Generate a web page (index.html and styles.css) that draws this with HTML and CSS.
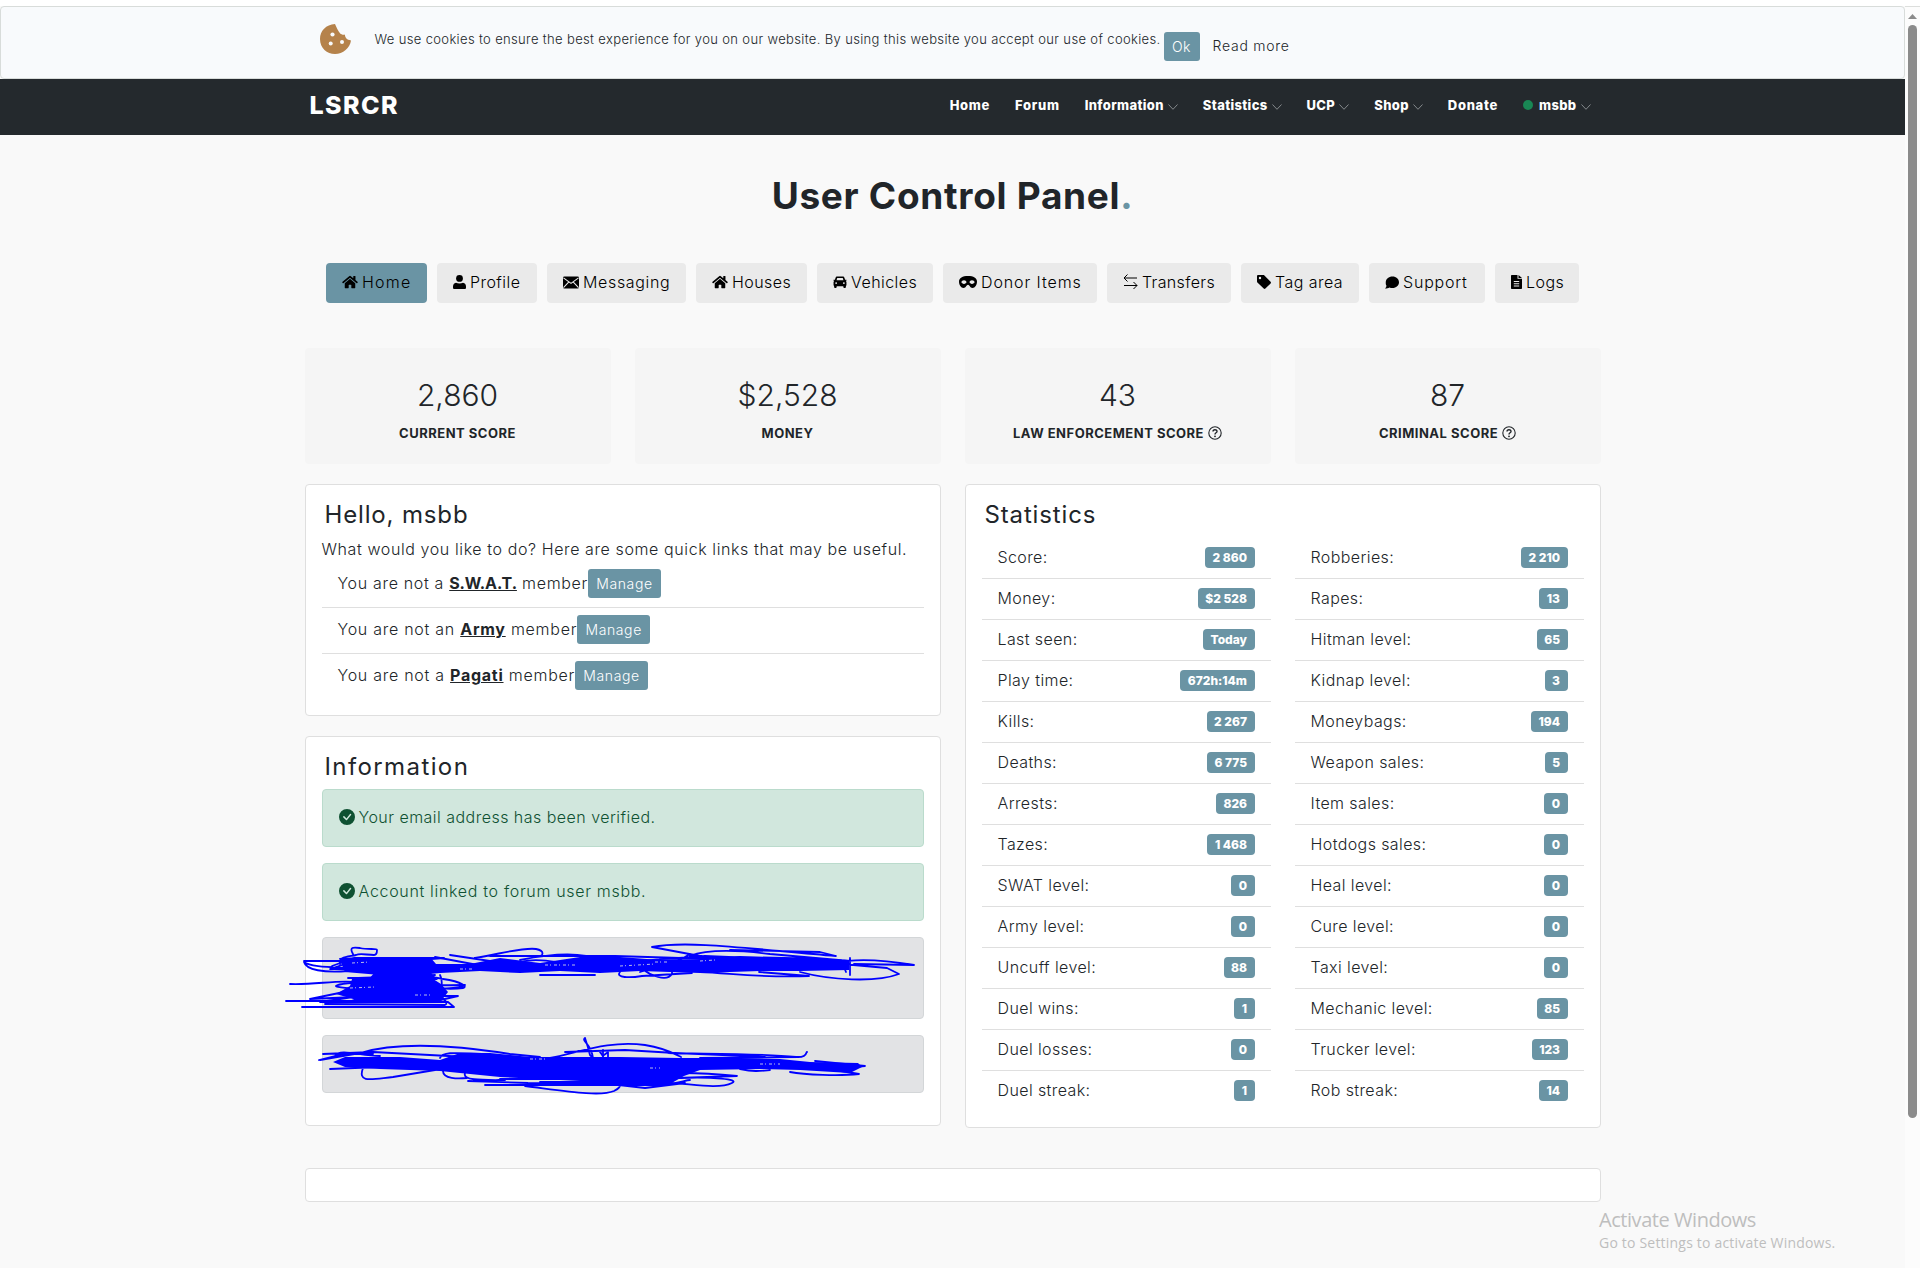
FILE: index.html
```html
<!doctype html>
<html lang="en">
<head>
    <meta charset="UTF-8">
    <title>User Control Panel</title>
    <link rel="stylesheet" href="styles.css">
</head>
<body>
<!-- shared icons -->
<svg class="sprite">
    <symbol id="i-home" viewBox="0 0 576 512"><path d="M280.4 148.3L96 300.1V464a16 16 0 0 0 16 16h112a16 16 0 0 0 16-16v-96a16 16 0 0 1 16-16h64a16 16 0 0 1 16 16v96a16 16 0 0 0 16 16h112a16 16 0 0 0 16-16V300L295.700 148.300a12 12 0 0 0-15.300 0zM571.600 251.500L488 182.600V44a12 12 0 0 0-12-12h-56a12 12 0 0 0-12 12v72.600L318.500 43a48 48 0 0 0-61 0L4.300 251.500a12 12 0 0 0-1.600 16.900l25.500 31A12 12 0 0 0 45.200 301l235.200-193.700a12 12 0 0 1 15.300 0L530.900 301a12 12 0 0 0 16.900-1.600l25.500-31a12 12 0 0 0-1.700-16.900z"/></symbol>
    <symbol id="i-check" viewBox="0 0 16 16"><path fill-rule="evenodd" d="M16 8A8 8 0 1 1 0 8a8 8 0 0 1 16 0zm-3.970-3.030a.75.75 0 0 0-1.080.022L7.477 9.417 5.384 7.323a.75.75 0 0 0-1.060 1.060L6.970 11.030a.75.75 0 0 0 1.079-.02l3.992-4.990a.75.75 0 0 0-.01-1.050z"/></symbol>
    <symbol id="i-down" viewBox="0 0 10 6"><path d="M.5.500L5 5.300 9.500.5" fill="none" stroke="currentColor"/></symbol>
    <symbol id="i-help" viewBox="0 0 14 14"><circle cx="7" cy="7" r="6.200" fill="none" stroke="currentColor" stroke-width="1.100"/><path d="M5 5.600C5 3.200 9 3.200 9 5.400 9 6.900 7 6.700 7 8.400" fill="none" stroke="currentColor" stroke-width="1.400"/><circle cx="7" cy="10.300" r=".9"/></symbol>
</svg>

<div class="cookie-bar">
    <div class="container cookie-inner">
        <svg class="cookie-icon" viewBox="0 0 31 30">
            <path d="M15 0C6 .500 0 7 0 15c0 9 7 15 15 15 8 0 15-6 16-13.500-2-.5-4-1-5-2.500-.8-1.200-1-2.500-1.200-3.500-1.500.500-3.500 0-4.800-1.300C18 7 16.500 3 15 0z"/>
            <circle class="hole" cx="12.500" cy="10.500" r="2.100"/><circle class="hole" cx="10.700" cy="19.500" r="2"/><circle class="hole" cx="22" cy="18" r="2"/>
        </svg>
        <span class="cookie-text">We use cookies to ensure the best experience for you on our website. By using this website you accept our use of cookies.</span>
        <a class="cookie-ok" href="#">Ok</a>
        <a class="cookie-more" href="#">Read more</a>
    </div>
</div>

<div class="navbar">
    <div class="container nav-inner">
        <a class="brand" href="#">LSRCR</a>
        <div class="nav">
            <a href="#">Home</a>
            <a href="#">Forum</a>
            <a href="#">Information<svg class="down"><use href="#i-down"/></svg></a>
            <a href="#">Statistics<svg class="down"><use href="#i-down"/></svg></a>
            <a href="#">UCP<svg class="down"><use href="#i-down"/></svg></a>
            <a href="#">Shop<svg class="down"><use href="#i-down"/></svg></a>
            <a href="#">Donate</a>
            <a href="#"><span class="online"></span>msbb<svg class="down"><use href="#i-down"/></svg></a>
        </div>
    </div>
</div>

<h1>User Control Panel<span>.</span></h1>

<div class="tabs">
    <a class="tab tab-home active" href="#"><svg width="16" height="14"><use href="#i-home"/></svg>Home</a>
    <a class="tab tab-profile" href="#"><svg width="13" height="14" viewBox="0 0 13 14"><circle cx="6.500" cy="3.400" r="3.400"/><path d="M3 7.700c2 1 5 1 7 0 2 .3 3 1.800 3 3.800v1c0 1-.5 1.500-1.500 1.500h-10C.5 14 0 13.500 0 12.500v-1c0-2 1-3.500 3-3.800z"/></svg>Profile</a>
    <a class="tab tab-messaging" href="#"><svg width="16" height="13" viewBox="0 0 17 13"><rect width="17" height="13" rx="1.500"/><path d="M.5 1.500l8 6 8-6M.500 12l5.500-6M16.500 12L11 6" fill="none" stroke="#eaeaea" stroke-width="1.100"/></svg>Messaging</a>
    <a class="tab tab-houses" href="#"><svg width="16" height="14"><use href="#i-home"/></svg>Houses</a>
    <a class="tab tab-vehicles" href="#"><svg width="14" height="12" viewBox="0 0 14 13"><path fill-rule="evenodd" d="M4 .5h6c1 0 1.500.5 1.800 1.300L12.500 4H14v1.200h-.8c.5.400.8 1 .8 1.600V10l-.6.700V12c0 .600-.4 1-1 1h-.8c-.6 0-1-.4-1-1v-1H3.400v1c0 .6-.4 1-1 1h-.8c-.6 0-1-.4-1-1v-1.300L0 10V6.800c0-.600.3-1.200.8-1.600H0V4h1.500l.7-2.200C2.500 1 3 .5 4 .5zM4 2.300L3.300 4.700h7.400L10 2.300zM2.800 6.700a1 1 0 1 0 .01 2 1 1 0 0 0 0-2zm8.400 0a1 1 0 1 0 .01 2 1 1 0 0 0 0-2z"/></svg>Vehicles</a>
    <a class="tab tab-donor" href="#"><svg width="18" height="12" viewBox="0 0 18 12"><path fill-rule="evenodd" d="M9 0c5.500 0 9 2 9 5.500C18 9 16 12 13.500 12 11 12 10.500 8.800 9 8.800S7 12 4.500 12C2 12 0 9 0 5.500 0 2 3.500 0 9 0zM5 4.200c-1.400 0-2.300 1-2.700 1.900.4.900 1.300 1.800 2.700 1.800s2.200-.9 2.600-1.800C7.200 5.200 6.400 4.200 5 4.200zm8 0c-1.400 0-2.200 1-2.600 1.900.4.900 1.200 1.800 2.600 1.800s2.300-.9 2.700-1.800c-.4-.9-1.300-1.900-2.700-1.900z"/></svg>Donor Items</a>
    <a class="tab tab-transfers" href="#"><svg width="15" height="16" viewBox="0 0 15 16"><path d="M14 4H1L4.500.500M1 4l3.500 3.500M1 11.500h13L10.500 8M14 11.500L10.500 15" fill="none" stroke="#000"/></svg>Transfers</a>
    <a class="tab tab-tag" href="#"><svg width="14" height="14" viewBox="0 0 14 14"><path fill-rule="evenodd" d="M0 1.300C0 .500.500 0 1.300 0h5c.5 0 .8.100 1.100.4l6.200 6.300c.5.500.5 1.200 0 1.700l-5.200 5.200c-.5.500-1.200.5-1.700 0L.4 7.400C.1 7.100 0 6.800 0 6.300zM3 1.800a1.200 1.200 0 1 0 .01 2.400 1.200 1.200 0 0 0 0-2.400z"/></svg>Tag area</a>
    <a class="tab tab-support" href="#"><svg width="14" height="13" viewBox="0 0 15 13"><path d="M8 0c4 0 7 2.800 7 6.200s-3 6.200-7 6.200c-1.200 0-2.200-.2-3.200-.6C3.500 12.600 2 13 0 13c1-.9 1.500-2 1.600-3C.8 9 .800 7.600.8 6.200.8 2.800 4 0 8 0z"/></svg>Support</a>
    <a class="tab tab-logs" href="#"><svg width="11" height="14" viewBox="0 0 11 14"><path fill-rule="evenodd" d="M1 0h5.500v3.700H11V13c0 .6-.4 1-1 1H1c-.6 0-1-.4-1-1V1c0-.6.4-1 1-1zm6.500 0L11 3H7.500zM2.800 6v1h5.400V6zm0 2.200v1h5.400v-1zm0 2.200v1h5.400v-1z"/></svg>Logs</a>
</div>

<div class="container">
    <div class="scores">
        <div class="score"><div class="score-num">2,860</div><div class="score-name">CURRENT SCORE</div></div>
        <div class="score"><div class="score-num">$2,528</div><div class="score-name">MONEY</div></div>
        <div class="score"><div class="score-num">43</div><div class="score-name">LAW ENFORCEMENT SCORE <svg><use href="#i-help"/></svg></div></div>
        <div class="score"><div class="score-num">87</div><div class="score-name">CRIMINAL SCORE <svg><use href="#i-help"/></svg></div></div>
    </div>

    <div class="columns">
        <div class="left">
            <div class="card hello">
                <h2>Hello, msbb</h2>
                <p>What would you like to do? Here are some quick links that may be useful.</p>
                <div class="link-row"><span>You are not a <b class="swat">S.W.A.T.</b> member</span><a class="manage" href="#">Manage</a></div>
                <div class="link-row"><span>You are not an <b>Army</b> member</span><a class="manage" href="#">Manage</a></div>
                <div class="link-row"><span>You are not a <b>Pagati</b> member</span><a class="manage" href="#">Manage</a></div>
            </div>

            <div class="card info">
                <h2>Information</h2>
                <div class="alert success"><svg><use href="#i-check"/></svg>Your email address has been verified.</div>
                <div class="alert success linked"><svg><use href="#i-check"/></svg>Account linked to forum user msbb.</div>
                <div class="alert secondary tall"></div>
                <div class="alert secondary"></div>
                <!-- pen marks over the two grey alerts -->
                <svg class="scribble" viewBox="280 920 660 180">
                    <g class="ink">
                        <path d="M339 958L365 957 400 958 430 957 436 964 470 964 500 958 540 963 580 957 620 957 660 960 700 959 727 957 760 957 790 958 849 960V970L800 971 760 971 700 973 640 971 600 973 560 971 520 973 480 971 440 973 420 975 380 975 345 972z"/>
                        <path d="M375 972h55l8 8h-70z"/>
                        <path d="M352 979L390 975 430 977 441 984 448 992 441 1001 400 1003 360 1001 336 994 350 986z"/>
                        <path d="M333 1062L345 1057 400 1057 440 1060 460 1053 490 1053 530 1057 570 1057 620 1057 680 1058 740 1058 780 1059 810 1062 858 1063 862 1067 850 1073 800 1070 760 1069 700 1070 684 1076 670 1084 640 1086 600 1082 540 1079 500 1077 460 1073 440 1071 380 1069 345 1067z"/>
                    </g>
                    <g class="pen">
                        <path d="M353 954c-4-7 0-7 7-6 8 2 17 0 17 2s0 5-3 5c-7 0-14-2-18 0-9 2-18 2-16 9M350 968c-20-1-40-1-46-6 2 8 20 11 44 9M304 961h50l-24 8h110M332 966l22-8h90l-64 5M290 984c25 1 45-4 65-2s50 4 110 3c-6 5-20 2-40 5M286 1001h150l22-5h-80l-68 3 34-7 100-1M302 1007h152l-6-5H320l40-6M440 975c4 8 0 12 2 22M353 978c30 0 70-4 90 1 20 3 25 8 20 9-20 3-50-3-90-6-20 0-35 2-37 4s60 7 100 6M348 1002l12-4h80c6 1 8 6 5 7l-120-1M348 978h80M355 981l80-6"/>
                        <path d="M435 957l75 14M450 955l60 9M475 958c25-4 48-11 61-9 10 2 6 7 4 7h-50M520 960c20-4 45-8 66-4M540 956h75l65 2M522 962c20-7 60 8 76 3M540 975h55M620 972c-5 6 10 6 22 4l50-3M642 968c8 8 25 14 30 6v-8M640 972l40-12 10-6M652 947c35-7 100 2 184 9l-16-4-90-2M652 947l80 15 55 1M690 956c20-8 55-5 80-2l80 7M700 972c30 1 60 6 109 4l-50-4M800 972c30 8 75 11 99 2l-12-6-90-8M835 963c25-6 55-2 79 2l-60-1M850 958v17M841 960l5 12M660 959l80-2 86 2M690 964h110M640 961l65-5 95 4"/>
                        <path d="M320 1060l40-7c40-12 100-7 150 1l30 3M323 1054l50-2 170 9M319 1060l24-6h30M330 1069l50-2M335 1056c5-8 25 0 45 0M363 1068c-6 16 10 11 30 9l42-7M443 1071c0 8 15 8 24 7M465 1073c-3 8 20 7 40 7M468 1081l60 2 90 1M485 1085h170c20 0 30-5 35-5M525 1086c40 5 75 11 89 5 12-6 3-9-3-12l-70-3M440 1058c3-8 25-4 50-4M550 1058c30-6 60-18 95-13 20 3 30 9 36 12M565 1052l60-2 50 3 90 4M585 1038c-4 3 6 5 8 20l-3-3c-2-8-4-14-5-17M600 1052c4 4 0 6 8 0v20M668 1053c35 1 90 0 128 4 12 1 10-6 11-5M700 1058l100-1M682 1073c20 0 35 1 55 3l-60 2M681 1078c30-1 60 1 51 5-14 7-45 0-63 0M610 1084l35 4 40-5M740 1069c15 3 20 2 30 1M790 1072c15 3 50 4 69 2l-30-5 36-3-50-5M500 1079h120M540 1082h90"/>
                        <path d="M603 1050v10M610 1068v14M591 1070v14"/>
                    </g>
                    <path class="gap" d="M352 963l18-1M460 969l14 0M545 965l30 0M620 966l35-2M700 961l15-1M655 962l12 0M350 988l25-1M415 995l18 0M530 1059l15 0M650 1068l10 0M760 1064l20 0"/>
                </svg>
            </div>
        </div>

        <div class="card stats">
            <h2>Statistics</h2>
            <div class="stat-lists">
                <div class="stat-list">
                    <div class="stat">Score:<span>2 860</span></div>
                    <div class="stat">Money:<span>$2 528</span></div>
                    <div class="stat">Last seen:<span>Today</span></div>
                    <div class="stat">Play time:<span>672h:14m</span></div>
                    <div class="stat">Kills:<span>2 267</span></div>
                    <div class="stat">Deaths:<span>6 775</span></div>
                    <div class="stat">Arrests:<span>826</span></div>
                    <div class="stat">Tazes:<span>1 468</span></div>
                    <div class="stat">SWAT level:<span>0</span></div>
                    <div class="stat">Army level:<span>0</span></div>
                    <div class="stat">Uncuff level:<span>88</span></div>
                    <div class="stat">Duel wins:<span>1</span></div>
                    <div class="stat">Duel losses:<span>0</span></div>
                    <div class="stat">Duel streak:<span>1</span></div>
                </div>
                <div class="stat-list">
                    <div class="stat">Robberies:<span>2 210</span></div>
                    <div class="stat">Rapes:<span>13</span></div>
                    <div class="stat">Hitman level:<span>65</span></div>
                    <div class="stat">Kidnap level:<span>3</span></div>
                    <div class="stat">Moneybags:<span>194</span></div>
                    <div class="stat">Weapon sales:<span>5</span></div>
                    <div class="stat">Item sales:<span>0</span></div>
                    <div class="stat">Hotdogs sales:<span>0</span></div>
                    <div class="stat">Heal level:<span>0</span></div>
                    <div class="stat">Cure level:<span>0</span></div>
                    <div class="stat">Taxi level:<span>0</span></div>
                    <div class="stat">Mechanic level:<span>85</span></div>
                    <div class="stat">Trucker level:<span>123</span></div>
                    <div class="stat">Rob streak:<span>14</span></div>
                </div>
            </div>
        </div>
    </div>

    <div class="card empty"></div>
</div>

<div class="watermark">
    <div class="wm-title">Activate Windows</div>
    <div class="wm-text">Go to Settings to activate Windows.</div>
</div>

<div class="scrollbar">
    <div class="arrow"></div>
    <div class="thumb"></div>
</div>
</body>
</html>
```
FILE: styles.css
```css
* {
    box-sizing: border-box;
    margin: 0;
    padding: 0;
}

body {
    width: 1920px;
    height: 1268px;
    padding: 6px 15px 0 0;
    overflow: hidden;
    position: relative;
    background: linear-gradient(#fff 6px, #f9f9f9 6px);
    color: #212529;
    font-family: Inter, "Liberation Sans", sans-serif;
    font-size: 16px;
    font-weight: 350;
    line-height: 24px;
}

a {
    color: inherit;
    text-decoration: none;
}

svg {
    flex: none;
    fill: currentColor;
}

.sprite {
    position: absolute;
    width: 0;
    height: 0;
}

.container {
    width: 1296px;
    margin: 0 auto;
}

/* cookie notice */
.cookie-bar {
    height: 73px;
    border: 1px solid #d8dcda;
    border-radius: 4px;
    background: #f8fafc;
}

.cookie-inner {
    display: flex;
    align-items: flex-start;
    padding-left: 15px;
}

.cookie-icon {
    width: 31px;
    height: 30px;
    margin-top: 17px;
    fill: #b5824b;
}

.hole {
    fill: #f8fafc;
}

.cookie-text {
    width: 789px;
    margin: 20px 0 0 24px;
    font-size: 13px;
    letter-spacing: .355px;
    white-space: nowrap;
}

.cookie-ok {
    width: 36px;
    height: 29px;
    margin-top: 25px;
    border-radius: 3px;
    background: #6a94a4;
    color: #fff;
    font-size: 14px;
    letter-spacing: .5px;
    line-height: 29px;
    text-align: center;
}

.cookie-more {
    margin: 27px 0 0 13px;
    font-size: 14px;
    letter-spacing: .75px;
}

/* navigation */
.navbar {
    height: 56px;
    background: #24292d;
    color: #fff;
}

.nav-inner {
    display: flex;
    justify-content: space-between;
    align-items: center;
    height: 52px;
    padding: 0 10px 0 5px;
}

.brand {
    font-size: 25px;
    font-weight: 800;
    letter-spacing: 1.4px;
}

.nav {
    display: flex;
    gap: 25px;
    font-size: 13px;
    font-weight: 800;
    letter-spacing: .35px;
}

.nav a {
    display: flex;
    align-items: center;
}

/* links without a dropdown */
.nav a:nth-child(1),
.nav a:nth-child(2),
.nav a:nth-child(7) {
    letter-spacing: .7px;
}

.down {
    width: 10px;
    height: 6px;
    margin: 3px 0 0 4px;
    color: #84898c;
}

.online {
    width: 10px;
    height: 10px;
    margin-right: 6px;
    border-radius: 50%;
    background: #198754;
}

h1 {
    margin-top: 37px;
    font-size: 37px;
    letter-spacing: .7px;
    line-height: 48px;
    text-align: center;
}

h1 span {
    color: #6a94a4;
}

.tabs {
    display: flex;
    justify-content: center;
    gap: 10px;
    margin-top: 43px;
    color: #000;
}

.tab {
    display: flex;
    align-items: center;
    gap: 4px;
    height: 40px;
    padding: 0 0 2px 16px;
    border-radius: 4px;
    background: #eaeaea;
    letter-spacing: .45px;
    white-space: nowrap;
}

.tab.active {
    background: #6a94a4;
}

.tab-home { width: 101px; letter-spacing: 1.2px; }
.tab-profile { width: 100px; }
.tab-messaging { width: 139px; letter-spacing: .65px; }
.tab-houses { width: 111px; }
.tab-vehicles { width: 116px; }
.tab-donor { width: 154px; letter-spacing: .9px; }
.tab-transfers { width: 124px; letter-spacing: .35px; }
.tab-tag { width: 118px; }
.tab-support { width: 116px; letter-spacing: .8px; }
.tab-logs { width: 84px; }

/* score boxes */
.scores {
    display: grid;
    grid-template-columns: repeat(4, 1fr);
    gap: 24px;
    margin-top: 45px;
}

.score {
    height: 116px;
    padding-top: 27px;
    border-radius: 4px;
    background: #f5f5f5;
    text-align: center;
}

.score-num {
    font-size: 30px;
    font-weight: 300;
    line-height: 40px;
}

.score-name {
    display: flex;
    justify-content: center;
    align-items: center;
    gap: 4px;
    margin-top: 6px;
    font-size: 13px;
    font-weight: 650;
    letter-spacing: .5px;
}

.score-name svg {
    width: 14px;
    height: 14px;
}

/* cards */
.columns {
    display: grid;
    grid-template-columns: 1fr 1fr;
    gap: 24px;
    align-items: start;
    margin-top: 20px;
}

.card {
    border: 1px solid #dfdfdf;
    border-radius: 4px;
    background: #fff;
}

h2 {
    padding-left: 3px;
    font-size: 24px;
    font-weight: 400;
    letter-spacing: .85px;
    line-height: 29px;
}

.hello {
    height: 232px;
    padding: 15px 16px;
}

.hello p {
    margin-top: 8px;
    letter-spacing: .6px;
    white-space: nowrap;
}

.link-row {
    display: flex;
    height: 46px;
    padding: 7px 16px;
    border-bottom: 1px solid #dfdfdf;
    letter-spacing: .73px;
}

.link-row span {
    padding-top: 2px;
}

.hello p + .link-row {
    height: 47px;
    padding-top: 8px;
    letter-spacing: .67px;
}

.link-row:last-child {
    border-bottom: 0;
}

.link-row b {
    text-decoration: underline;
}

.link-row .swat {
    letter-spacing: -.1px;
}

.manage {
    width: 73px;
    height: 29px;
    border-radius: 3px;
    background: #6a94a4;
    color: #fff;
    font-size: 14px;
    letter-spacing: .6px;
    line-height: 29px;
    text-align: center;
}

.info {
    position: relative;
    height: 390px;
    margin-top: 20px;
    padding: 15px 16px;
}

.alert {
    display: flex;
    align-items: center;
    gap: 4px;
    height: 58px;
    margin-bottom: 16px;
    padding: 0 16px 2px;
    border: 1px solid;
    border-radius: 4px;
    letter-spacing: .47px;
}

.alert.linked {
    letter-spacing: .68px;
}

.info h2 {
    margin-bottom: 8px;
    letter-spacing: 1.4px;
}

.alert svg {
    width: 16px;
    height: 16px;
}

.success {
    border-color: #badbcc;
    background: #d1e7dd;
    color: #0f5132;
}

.secondary {
    border-color: #d3d6d8;
    background: #e2e3e5;
}

.tall {
    height: 82px;
}

.scribble {
    position: absolute;
    left: -26px;
    top: 183px;
    width: 660px;
    height: 180px;
}

.ink {
    fill: #00f;
}

.pen {
    fill: none;
    stroke: #00f;
    stroke-width: 1.8;
    stroke-linecap: round;
    stroke-linejoin: round;
}

.gap {
    fill: none;
    stroke: #b9bbe8;
    stroke-width: 1;
    stroke-dasharray: 3 2 1 3;
}

.stats {
    height: 644px;
    padding: 15px 16px;
}

.stat-lists {
    display: grid;
    grid-template-columns: 1fr 1fr;
    gap: 24px;
    margin-top: 9px;
}

.stat {
    display: flex;
    justify-content: space-between;
    align-items: center;
    height: 41px;
    padding: 0 16px 2px;
    border-bottom: 1px solid #dfdfdf;
    letter-spacing: .4px;
}

.stat:last-child {
    border-bottom-color: transparent;
}

.stat span {
    height: 21px;
    padding: 0 7.5px;
    border-radius: 4px;
    background: #6a94a4;
    color: #fff;
    font-size: 12px;
    font-weight: 800;
    letter-spacing: 0;
    line-height: 21px;
}

.empty {
    height: 34px;
    margin-top: 40px;
}

/* desktop watermark */
.watermark {
    position: absolute;
    left: 1599px;
    top: 1208px;
    color: #bebebe;
    font-family: "Open Sans", "Noto Sans", sans-serif;
    font-weight: 400;
    white-space: nowrap;
}

.wm-title {
    font-size: 20px;
    letter-spacing: -.45px;
}

.wm-text {
    font-size: 14px;
    letter-spacing: .2px;
    line-height: 22px;
}

.scrollbar {
    position: absolute;
    top: 6px;
    right: 0;
    width: 15px;
    height: 1262px;
    padding: 7px 3px 0;
    border-top: 1px solid #dcdedc;
    background: #fcfcfc;
}

.arrow {
    width: 9px;
    height: 5px;
    background: #8b8b8b;
    clip-path: polygon(50% 0, 100% 100%, 0 100%);
}

.thumb {
    width: 9px;
    height: 1093px;
    margin-top: 6px;
    border-radius: 5px;
    background: #8b8b8b;
}
```
